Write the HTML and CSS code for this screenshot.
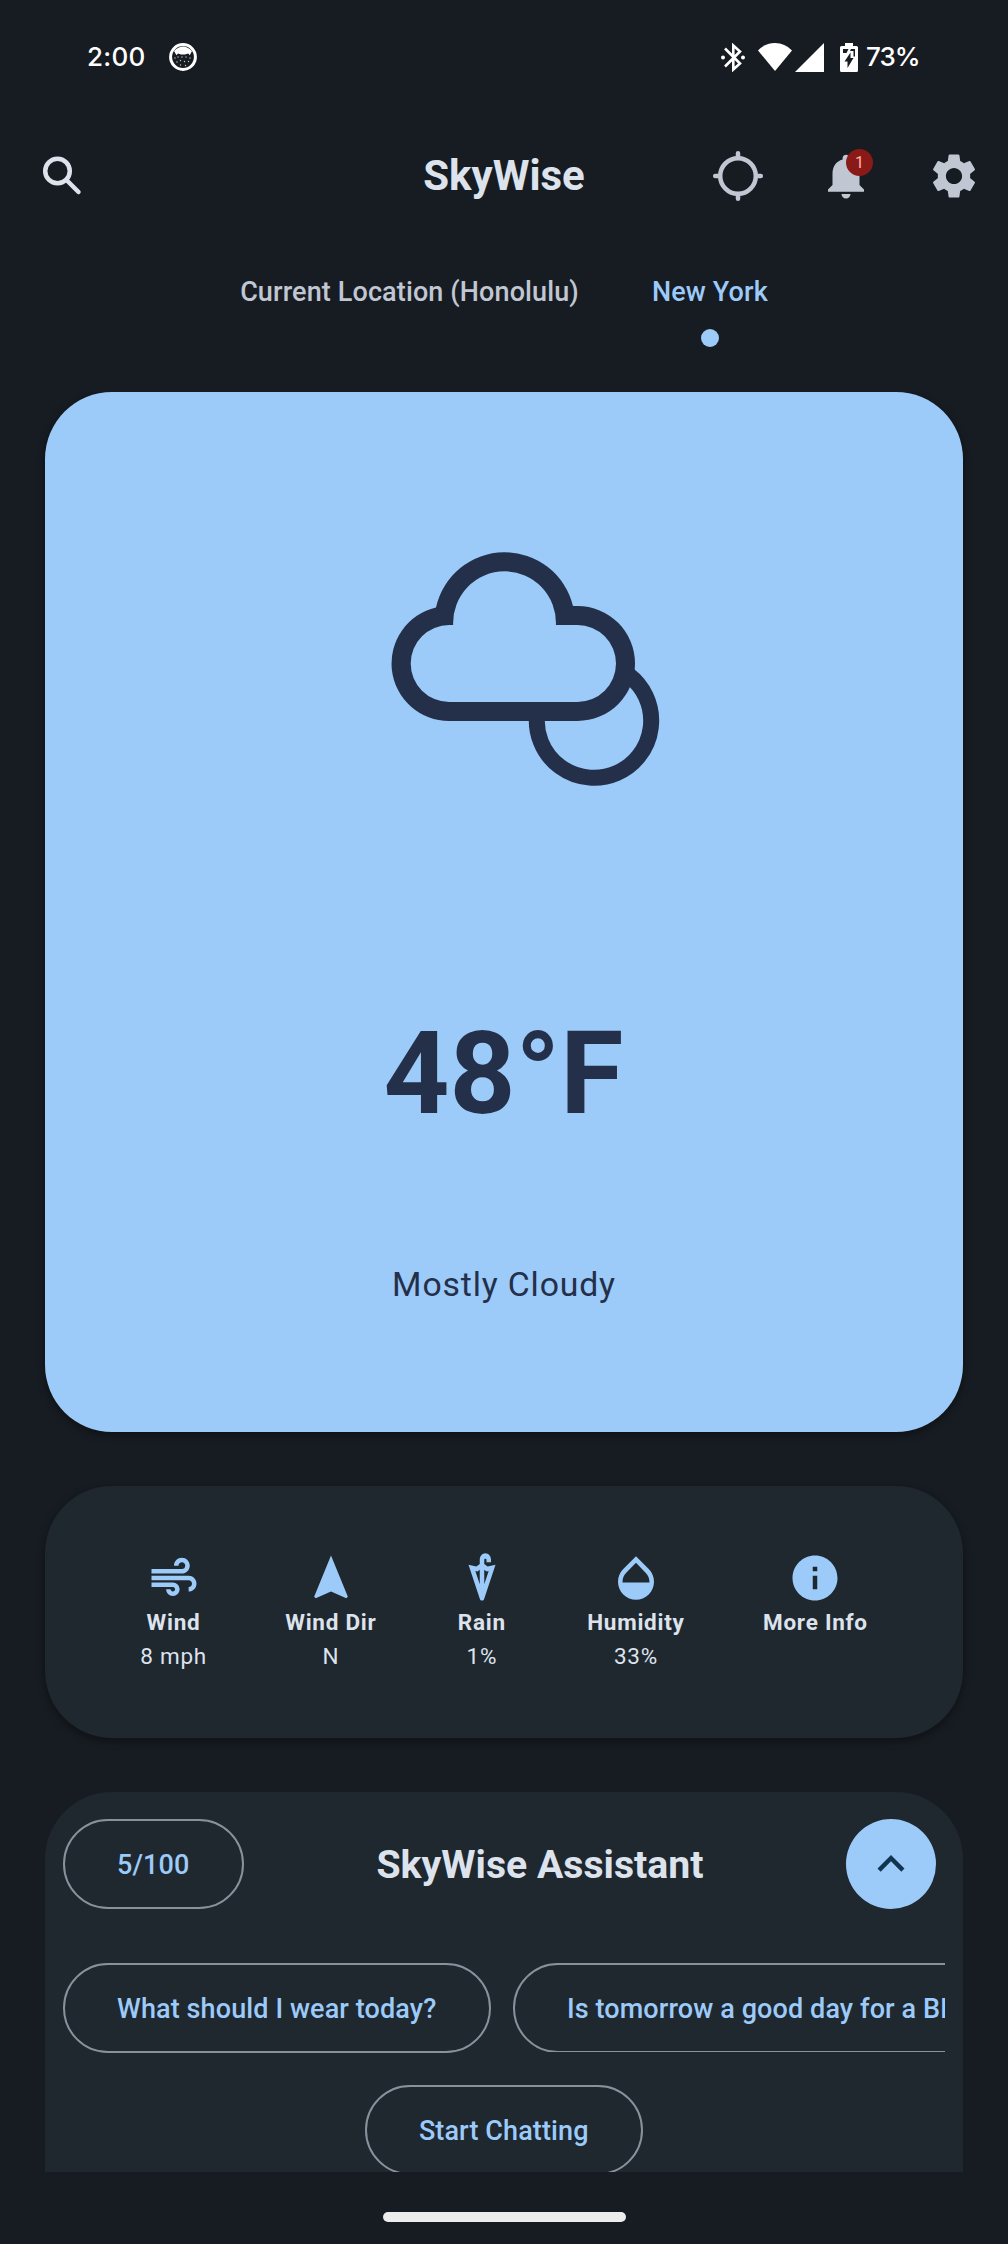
FILE: index.html
```html
<!DOCTYPE html>
<html lang="en">
<head>
<meta charset="utf-8">
<title>SkyWise</title>
<link rel="stylesheet" href="styles.css">
</head>
<body>
<div class="screen">
  <div class="status-bar">
    <div class="status-left">
      <span class="clock">2:00</span>
      <svg class="status-face" viewBox="0 0 28 28">
        <circle cx="14" cy="14" r="12.4" fill="none" stroke="#fff" stroke-width="3"/>
        <path fill="#fff" d="M5 8Q14-1 23 8L20.800 12.200L19.200 10.500L16 11.400H12L9 10.500L7.400 12.200Z"/>
        <g fill="#c4c9cf"><circle cx="6" cy="15" r=".7"/><circle cx="9" cy="14" r=".7"/><circle cx="13" cy="14" r=".7"/><circle cx="17" cy="14" r=".7"/><circle cx="21" cy="15" r=".7"/><circle cx="8" cy="19" r=".7"/><circle cx="11.500" cy="17.500" r=".7"/><circle cx="15.500" cy="18.500" r=".7"/><circle cx="19.500" cy="18.500" r=".7"/><circle cx="11.500" cy="22" r=".7"/><circle cx="16.500" cy="22.500" r=".7"/></g>
      </svg>
    </div>
    <div class="status-right">
      <svg class="bluetooth" viewBox="0 0 24 29">
        <path fill="none" stroke="#fff" stroke-width="2.600" d="M4 5.500L19 20.500L12.300 26.500V2.500L19 8.500L4 23.500"/>
        <circle cx="2" cy="14.500" r="2" fill="#fff"/><circle cx="22" cy="14.500" r="2" fill="#fff"/>
      </svg>
      <svg class="wifi" viewBox="0 0 34 28"><path fill="#fff" d="M0 7.500Q7 0 17 0T34 7.500L17 28Z"/></svg>
      <svg class="signal" viewBox="0 0 29 29"><path fill="#fff" d="M29 0V29H0Z"/></svg>
      <svg class="battery" viewBox="0 0 18 29">
        <path fill="#fff" d="M5 0H13V3H16.500Q18 3 18 4.500V27.500Q18 29 16.500 29H1.500Q0 29 0 27.500V4.500Q0 3 1.500 3H5Z"/>
        <path fill="#171c22" d="M3 6H8.500L6.500 10H3ZM11 6H15V13.500H13.500V8H10ZM10.500 9.500V15H13.500L7.500 25V18.500H4.500Z"/>
      </svg>
      <span class="percent">73%</span>
    </div>
  </div>

  <header class="top-bar">
    <svg class="search" viewBox="0 0 40 40"><circle cx="15.500" cy="15" r="12.300"/><path d="M24.500 24L36.500 36"/></svg>
    <h1 class="app-title">SkyWise</h1>
    <div class="actions">
      <svg class="locate" viewBox="0 0 54 54"><circle cx="27" cy="27" r="17.800"/><path d="M27 4.200V8M27 46V49.800M4.200 27H8M46 27H49.800"/></svg>
      <div class="bell">
        <svg viewBox="0 0 24 24"><path d="M12 22c1.100 0 2-.9 2-2h-4c0 1.100.89 2 2 2zm6-6v-5c0-3.070-1.640-5.640-4.500-6.320V4c0-.83-.67-1.500-1.500-1.500s-1.500.67-1.500 1.500v.68C7.630 5.360 6 7.920 6 11v5l-2 2v1h16v-1l-2-2z"/></svg>
        <span class="badge">1</span>
      </div>
      <svg class="gear" viewBox="0 0 24 24"><path d="M19.140 12.940c.04-.3.06-.61.06-.94 0-.32-.02-.64-.07-.94l2.030-1.580c.18-.14.23-.41.12-.61l-1.920-3.320c-.12-.22-.37-.29-.59-.22l-2.390.96c-.5-.38-1.030-.7-1.620-.94l-.36-2.540c-.04-.24-.24-.41-.48-.41h-3.840c-.24 0-.43.17-.47.41l-.36 2.540c-.59.24-1.130.57-1.620.94l-2.390-.96c-.22-.08-.47 0-.59.22L2.740 8.870c-.12.21-.08.47.12.61l2.030 1.580c-.05.3-.09.63-.09.94s.02.64.07.94l-2.030 1.580c-.18.14-.23.41-.12.61l1.920 3.320c.12.22.37.29.59.22l2.390-.96c.5.38 1.030.7 1.620.94l.36 2.540c.05.24.24.41.48.41h3.840c.24 0 .44-.17.47-.41l.36-2.540c.59-.24 1.130-.56 1.620-.94l2.390.96c.22.08.47 0 .59-.22l1.920-3.320c.12-.22.07-.47-.12-.61l-2.010-1.580zM12 15.600c-1.980 0-3.600-1.620-3.600-3.600s1.620-3.600 3.600-3.600 3.600 1.620 3.600 3.600-1.620 3.600-3.600 3.600z"/></svg>
    </div>
  </header>

  <nav class="tabs">
    <span class="tab">Current Location (Honolulu)</span>
    <span class="tab active">New York</span>
  </nav>

  <main class="content">
    <section class="card weather">
      <svg class="cloud" viewBox="391 551 270 236">
        <path fill="#243049" fill-rule="evenodd" d="M449.200 721A57.500 57.500 0 0 1 436 607.500A70.300 70.300 0 0 1 573 606H577.500A57.500 57.500 0 0 1 577.500 721ZM449.200 702H577.500A38.500 38.500 0 0 0 577.500 625H555.900A51.400 51.400 0 1 0 453.200 625H449.200A38.500 38.500 0 0 0 449.200 702Z"/>
        <path fill="none" stroke="#243049" stroke-width="16" d="M537.100 714.500A57.200 57.200 0 1 0 628.500 675"/>
      </svg>
      <div class="temperature">48°F</div>
      <div class="condition">Mostly Cloudy</div>
    </section>

    <section class="card stats">
      <div class="stat">
        <svg viewBox="0 0 24 24"><path d="M14.500 17c0 1.650-1.350 3-3 3s-3-1.350-3-3h2c0 .55.45 1 1 1s1-.45 1-1-.45-1-1-1H2v-2h9.500c1.650 0 3 1.350 3 3zM19 6.500C19 4.570 17.430 3 15.500 3S12 4.570 12 6.500h2c0-.83.67-1.500 1.500-1.500s1.500.67 1.500 1.500S16.330 8 15.500 8H2v2h13.500c1.930 0 3.500-1.570 3.500-3.500zm-.5 4.500H2v2h16.500c.83 0 1.500.67 1.500 1.500s-.67 1.500-1.500 1.500v2c1.930 0 3.500-1.570 3.500-3.500S20.430 11 18.500 11z"/></svg>
        <b>Wind</b><span>8 mph</span>
      </div>
      <div class="stat">
        <svg viewBox="0 0 24 24"><path d="M12 2L4.500 20.290l.71.71L12 18l6.790 3 .71-.71z"/></svg>
        <b>Wind Dir</b><span>N</span>
      </div>
      <div class="stat">
        <svg viewBox="0 0 24 24"><path fill-rule="evenodd" d="M14.500 6.920L13 5.770V3.880c0-.26.22-.48.5-.48s.5.21.5.48V5h2V3.880C16 2.300 14.880 1 13.500 1S11 2.290 11 3.880v1.890L9.500 6.920 6 6.070l5.050 15.250c.15.45.55.68.95.68s.8-.23.95-.69L18 6.070l-3.500.85zM13.280 8.500l.76.58.92-.23L13 14.800V8.290l.28.21zM10.720 8.500l.28-.21v6.500L9.040 8.860l.92.22.76-.58z"/></svg>
        <b>Rain</b><span>1%</span>
      </div>
      <div class="stat">
        <svg viewBox="0 0 24 24"><path fill-rule="evenodd" d="M17.660 8L12 2.350 6.340 8C4.780 9.560 4 11.640 4 13.640s.78 4.110 2.340 5.670 3.610 2.350 5.660 2.350 4.100-.79 5.660-2.350S20 15.640 20 13.640 19.220 9.560 17.660 8zM6 14c.01-2 .62-3.270 1.760-4.400L12 5.270l4.240 4.380C17.380 10.770 17.990 12 18 14H6z"/></svg>
        <b>Humidity</b><span>33%</span>
      </div>
      <div class="stat">
        <svg viewBox="0 0 24 24"><path fill-rule="evenodd" d="M12 2C6.480 2 2 6.480 2 12s4.480 10 10 10 10-4.480 10-10S17.520 2 12 2zm1 15h-2v-6h2v6zm0-8h-2V7h2v2z"/></svg>
        <b>More Info</b>
      </div>
    </section>

    <section class="assistant">
      <div class="assistant-head">
        <span class="pill">5/100</span>
        <h2 class="assistant-title">SkyWise Assistant</h2>
        <button class="expand" aria-label="Expand"><svg viewBox="0 0 24 24"><path d="M12 8l-6 6 1.410 1.410L12 10.830l4.590 4.580L18 14z"/></svg></button>
      </div>
      <div class="suggestions">
        <span class="pill">What should I wear today?</span>
        <span class="pill trimmed">Is tomorrow a good day for a BBQ?</span>
      </div>
      <div class="start"><span class="pill">Start Chatting</span></div>
    </section>
  </main>
  <div class="gesture"><div class="gesture-bar"></div></div>
</div>
</body>
</html>
```

FILE: styles.css
```css
* { box-sizing: border-box; margin: 0; padding: 0; }
svg { display: block; flex: none; }
body { background: #171c22; color: #dde3ed; font-family: Roboto, sans-serif; }
.screen { width: 1008px; height: 2244px; display: flex; flex-direction: column; overflow: hidden; }

.status-bar { height: 114px; padding: 0 89px 0 87px; display: flex; justify-content: space-between; align-items: center; color: #fff; font: 500 26px/30px Inter, sans-serif; }
.status-left, .status-right { display: flex; align-items: center; }
.clock { width: 58px; letter-spacing: 0.3px; white-space: nowrap; }
.status-face { width: 28px; height: 28px; margin-left: 24px; }
.bluetooth { width: 24px; height: 29px; }
.wifi { width: 34px; height: 28px; margin-left: 13px; }
.signal { width: 29px; height: 29px; margin-left: 3px; }
.battery { width: 18px; height: 29px; margin-left: 16px; }
.percent { width: 53px; margin-left: 8px; letter-spacing: -1px; white-space: nowrap; }

.top-bar { height: 124px; padding: 0 27px 0 42px; display: grid; grid-template-columns: 1fr auto 1fr; align-items: center; }
.search { width: 40px; height: 40px; fill: none; stroke: #dde3ed; stroke-width: 4.5; stroke-linecap: round; }
.app-title { font-size: 42px; line-height: 50px; font-weight: 700; margin-left: -15px; }
.actions { display: flex; justify-content: flex-end; gap: 54px; fill: #c0c7d3; }
.actions svg { width: 54px; height: 54px; }
.actions .locate { fill: none; stroke: #c0c7d3; stroke-width: 4.5; stroke-linecap: round; }
.bell { position: relative; }
.badge { position: absolute; left: 27px; top: 0; width: 27px; height: 27px; border-radius: 50%; background: #8a1a17; color: #ffb4ab; font-size: 16px; line-height: 27px; text-align: center; }

.tabs { height: 154px; padding-top: 37px; display: flex; justify-content: center; gap: 73px; font-size: 27px; letter-spacing: 0.12px; line-height: 34px; font-weight: 500; color: #c0c7d3; }
.tab.active { color: #9ccaf9; display: flex; flex-direction: column; align-items: center; }
.tab.active::after { content: ""; width: 18px; height: 18px; margin-top: 20px; border-radius: 50%; background: #9ccaf9; }

.content { height: 1780px; padding: 0 45px; display: flex; flex-direction: column; gap: 54px; overflow: hidden; flex: none; }
.card { border-radius: 67px; box-shadow: 0 3px 8px rgba(0, 0, 0, .4); flex: none; }
.weather { height: 1040px; background: #9ccaf9; color: #243049; display: flex; flex-direction: column; align-items: center; padding-top: 159px; }
.cloud { width: 270px; height: 236px; margin-left: 44px; }
.temperature { margin-top: 217px; margin-right: 1px; font-size: 115px; line-height: 140px; font-weight: 700; }
.condition { margin-top: 120px; font-size: 33.75px; line-height: 42px; letter-spacing: 0.85px; }

.stats { height: 252px; background: #1f272f; display: flex; justify-content: center; gap: 78.3px; padding-top: 65px; }
.stat { display: flex; flex-direction: column; align-items: center; font-size: 22.500px; letter-spacing: 0.75px; }
.stat svg { width: 54px; height: 54px; fill: #9ccaf9; }
.stat b { line-height: 34px; font-weight: 700; }
.stat span { line-height: 34px; }

.assistant { height: 460px; flex: none; border-radius: 67px 67px 0 0; background: #1f272f; padding: 27px 18px 0; }
.assistant-head { display: flex; justify-content: space-between; align-items: center; padding-right: 9px; }
.assistant-title { margin-right: 10px; padding-top: 2px; font-size: 39.2px; line-height: 46px; font-weight: 700; }
.pill { display: block; height: 90px; flex: none; padding: 1px 52.5px 0 52px; border: 2px solid #8a919d; border-radius: 45px; color: #9ccaf9; font-size: 27px; letter-spacing: 0.11px; line-height: 86px; font-weight: 500; white-space: nowrap; }
.expand { width: 90px; height: 90px; border: 0; border-radius: 50%; background: #9ccaf9; display: flex; align-items: center; justify-content: center; }
.expand svg { width: 54px; height: 54px; fill: #113550; }
.suggestions { display: flex; gap: 22px; margin-top: 54px; overflow: hidden; }
.trimmed { clip-path: inset(0 0 1px 0); }
.start { display: flex; justify-content: center; margin-top: 31.5px; }

.gesture { flex: 1; display: flex; justify-content: center; padding-top: 40px; }
.gesture-bar { width: 243px; height: 10px; border-radius: 5px; background: #ededed; }
```
